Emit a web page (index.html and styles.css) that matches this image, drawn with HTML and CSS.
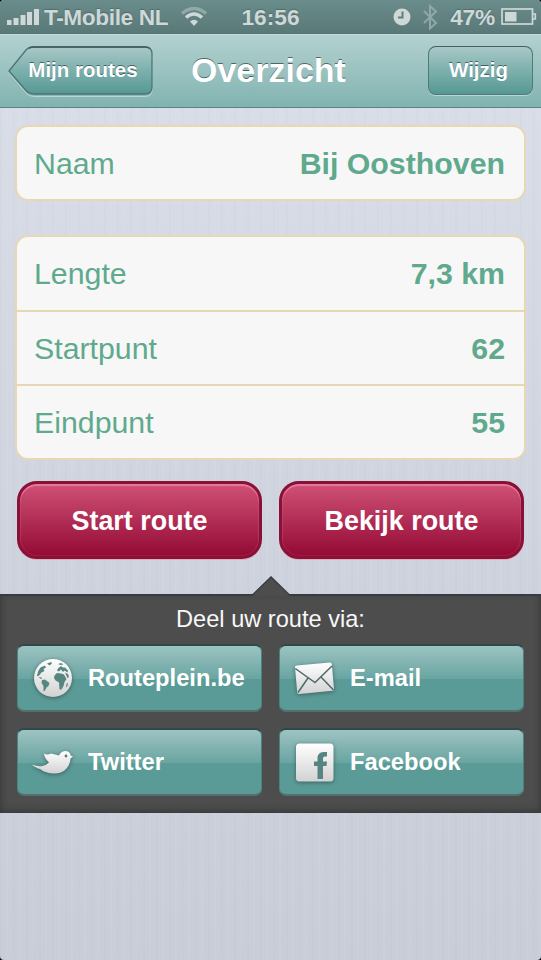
FILE: index.html
```html
<!DOCTYPE html>
<html lang="nl">
<head>
<meta charset="utf-8">
<title>Overzicht</title>
<link rel="stylesheet" href="styles.css">
</head>
<body>
<div class="screen">
  <header class="status">
    <div class="status-left">
      <svg class="signal" width="33" height="18" viewBox="0 0 33 18"><path d="M0 12h4.500v5H0zM6.500 10h5v7h-5zM13.500 7h5v10h-5zM20 4h5v13h-5zM27 1h5v16h-5z"/></svg>
      <span class="carrier">T-Mobile NL</span>
      <svg class="wifi" width="28" height="20" viewBox="0 0 28 20"><path class="dim" d="M2 6.500Q14-3.500 26 6.500"/><path d="M6 10.500Q14 3.500 22 10.500"/><path d="M10 14.500Q14 11 18 14.500L14 19z" class="solid"/></svg>
    </div>
    <span class="clock">16:56</span>
    <div class="status-right">
      <svg class="alarm" width="18" height="18" viewBox="0 0 18 18"><circle cx="9" cy="9" r="8.500"/><path d="M9.500 3.500v6H5"/></svg>
      <svg class="bluetooth" width="16" height="26" viewBox="0 0 16 26"><path d="M2 7l12 12-6 5.500V2l6 5.500L2 19"/></svg>
      <span class="percent">47%</span>
      <svg class="battery" width="36" height="18" viewBox="0 0 36 18"><rect class="case" x="1" y="1" width="30.500" height="15"/><path class="case" d="M32 6h2.300v5H32"/><rect class="level" x="4" y="4" width="11.500" height="9.500"/></svg>
    </div>
  </header>

  <nav class="nav">
    <button class="back">
      <svg class="back-shape" width="146" height="52" viewBox="0 0 146 52">
        <defs><linearGradient id="backfill" x1="0" y1="0" x2="0" y2="1"><stop offset="0" stop-color="#a9c8c7"/><stop offset=".5" stop-color="#7cb0ad"/><stop offset="1" stop-color="#579893"/></linearGradient></defs>
        <path d="M1 26Q14 10 18 5 21 2 26 2H137Q144 2 144 9V43Q144 50 137 50H26Q21 50 18 46.500 14 42 1 26Z" fill="none" stroke="#b9d7d5" transform="translate(0 .5)"/>
        <path d="M1 25Q14 9 18 4 21 1 26 1H137Q144 1 144 8V41Q144 48 137 48H26Q21 48 18 44.500 14 40 1 25Z" fill="url(#backfill)" stroke="#4c7475" stroke-width="1.300"/>
        <path d="M21 2Q23 1 26 1H137Q140 1 142 2.500" fill="none" stroke="#41595d" stroke-width="1.500"/>
      </svg>
      <span class="back-label">Mijn routes</span>
    </button>
    <h1 class="title">Overzicht</h1>
    <button class="edit">Wijzig</button>
  </nav>

  <main class="content">
    <dl class="group">
      <div class="row"><dt>Naam</dt><dd>Bij Oosthoven</dd></div>
    </dl>
    <dl class="group details">
      <div class="row"><dt>Lengte</dt><dd>7,3 km</dd></div>
      <div class="row"><dt>Startpunt</dt><dd>62</dd></div>
      <div class="row"><dt>Eindpunt</dt><dd>55</dd></div>
    </dl>
    <div class="actions">
      <button class="primary">Start route</button>
      <button class="primary">Bekijk route</button>
    </div>
  </main>

  <section class="share">
    <svg class="notch" width="38" height="20" viewBox="0 0 38 20"><path d="M0 20L1 19 19 1 37 19 38 20z" fill="#4d4d4d"/><path d="M0 19L1 18.500 19 1 37 18.500 38 19" fill="none" stroke="#383c40" stroke-width="1.500"/></svg>
    <h2 class="share-title">Deel uw route via:</h2>
    <div class="share-grid">
      <button class="share-button">
        <svg class="icon" width="42" height="42" viewBox="0 0 42 42">
          <defs><linearGradient id="metal" x1="0" y1="0" x2="0" y2="1"><stop offset="0" stop-color="#fff"/><stop offset="1" stop-color="#d2d2d2"/></linearGradient></defs>
          <circle cx="21" cy="20" r="19" fill="url(#metal)"/>
          <g class="land">
            <path d="M5 17.500Q5.500 13 8.500 9.500L13 7.500 14 9.500 11.500 11 12.500 13 9.500 14.500 7.500 17 6 18.500zM15 5.500L19 4 20 5.500 17.500 7.500zM7 19l2.500.5.5 1.500-2-.5z"/>
            <path d="M10 22L13 21.500 17.500 25 16.500 28 14.500 29.500 13 32.500 11.500 33.500 11.500 28 9.500 25z"/>
            <path d="M22.500 17.500L25 15 29 15.500 32 16.500 34.500 21 32.500 24 31.500 28 29.500 31.500 27.500 31.500 27 24.500 23.500 22.500 22 20z"/>
            <path d="M25 12.500L26 10.500 29 8 31 9.500 33 9.500 36 12.500 35.500 14.500 32.500 12.500 31 14 29 11.500 27 13.500zM26 6l3-1 2.500 1.500-3 .5zM33 14.500L36 16 37 19 35.500 20zM34.500 26l1.500-1.500-.5 3.500-1.500 1.500z"/>
          </g>
        </svg>
        <span>Routeplein.be</span>
      </button>
      <button class="share-button">
        <svg class="icon" width="42" height="42" viewBox="0 0 42 42">
          <path d="M1 9Q.800 7.800 2.500 7.500L35.500 4.500Q37.500 4.300 37.800 6L40 31Q40.100 32.500 38.500 32.800L5.500 36Q3.500 36.200 3.200 34.500z" fill="url(#metal)"/>
          <path d="M1.300 10.500L21 24.500 38 8M4 34.500L14 20M39.500 32L27 19" fill="none" stroke="#4f6a68" stroke-width="1.500"/>
        </svg>
        <span>E-mail</span>
      </button>
      <button class="share-button">
        <svg class="icon" width="42" height="42" viewBox="0 0 42 42">
          <path d="M0 22.500Q6 25 10.500 24Q14.500 23 17 20.500Q12.500 16.500 12 11.500Q15 13.500 19 11.500L27 13.500Q28.500 9.500 33 9Q38 9 38.700 13.500L41 14.500 38.500 16.500Q38 24 32.500 28.500Q28 32 21 31.500Q12 30.500 9 27.500Q2 25 0 22.500z" fill="url(#metal)"/>
          <circle cx="34" cy="14" r="1.400" fill="#607572"/>
        </svg>
        <span>Twitter</span>
      </button>
      <button class="share-button">
        <svg class="icon" width="42" height="42" viewBox="0 0 42 42">
          <rect x="2" y="1.500" width="37.500" height="38" rx="3.500" fill="url(#metal)"/>
          <path d="M23.500 37V24H20V19.500H23.500V16.500Q23.500 10 29.500 10H33V14.500H31Q29 14.500 29 16.500V19.500H33L32.500 24H29V37z" fill="#568581"/>
        </svg>
        <span>Facebook</span>
      </button>
    </div>
  </section>
</div>
</body>
</html>
```
FILE: styles.css
```css
* { box-sizing: border-box; }
body { margin: 0; background: #000; font-family: "Liberation Sans", Arial, sans-serif; }
button { font: inherit; padding: 0; border: 0; }
h1, h2, dl, dd { margin: 0; }

.screen {
  width: 541px;
  height: 960px;
  overflow: hidden;
  border-radius: 4px;
  background:
    repeating-linear-gradient(90deg, rgba(110, 125, 160, .025) 0 2px, transparent 2px 6px, rgba(255, 255, 255, .04) 6px 8px, transparent 8px 13px),
    linear-gradient(#d8dde7 108px, #cdd2dd 600px, #c9cdd8);
}

.status {
  display: grid;
  grid-template-columns: 1fr auto 1fr;
  align-items: center;
  height: 34px;
  padding: 0 4px 0 7px;
  background: linear-gradient(#6a8c8b, #5a7a79 32px, #527473);
  color: #ced8d7;
  font-size: 22.7px;
  font-weight: bold;
  text-shadow: 0 -1px 1px rgba(50, 75, 75, .45);
}
.status-left, .status-right { display: flex; align-items: center; }
.status-right { justify-content: flex-end; }
.signal { fill: #ced8d7; margin-right: 4px; }
.carrier { letter-spacing: -.4px; white-space: nowrap; }
.clock { margin-left: -3px; }
.wifi { margin-left: 12px; fill: none; stroke: #ced8d7; stroke-width: 3.5; }
.wifi .dim { stroke: #91a9a8; }
.wifi .solid { fill: #ced8d7; stroke: none; }
.alarm { fill: #ced8d7; margin-right: 11px; }
.alarm path { fill: none; stroke: #5e7f7e; stroke-width: 2; }
.bluetooth { fill: none; stroke: #90a8a7; stroke-width: 2; margin-right: 12px; }
.percent { margin-right: 6px; letter-spacing: -.2px; }
.battery .case { fill: none; stroke: #ced8d7; stroke-width: 1.7; }
.battery .level { fill: #ced8d7; }

.nav {
  display: grid;
  grid-template-columns: 146px 1fr 105px;
  align-items: center;
  height: 74px;
  padding: 0 8px;
  color: #fff;
  background: linear-gradient(#b3d1d0, #81b3b0);
  border-top: 1px solid #c1dbd9;
  border-bottom: 1.5px solid #578482;
  text-shadow: 0 -1.5px 0 rgba(50, 72, 74, .75);
}
.back { position: relative; width: 146px; height: 50px; background: none; color: inherit; text-shadow: inherit; }
.back-shape { position: absolute; left: 0; top: 0; }
.back-label { position: relative; top: -1px; padding-left: 4px; font-size: 20.5px; font-weight: bold; white-space: nowrap; }
.title { padding: 0 0 2px 37px; font-size: 34px; line-height: 40px; }
.edit {
  width: 105px;
  height: 49px;
  padding-right: 4px;
  border: 1.5px solid #50797a;
  border-top-color: #445e61;
  border-radius: 8px;
  background: linear-gradient(#a9c8c7, #7cb0ad 50%, #579893);
  box-shadow: 0 1px 0 #b9d7d5;
  color: inherit;
  font-size: 20.5px;
  font-weight: bold;
  text-shadow: inherit;
  transform: translateY(-1px);
}

.content { height: 486px; padding: 17px 15px 0; }
.group {
  border: 2px solid #e7d7b4;
  border-radius: 13px;
  background: #f7f7f7;
  color: #5fa98d;
  font-size: 30.3px;
}
.details { margin-top: 34px; }
.row { display: flex; justify-content: space-between; align-items: center; height: 72px; padding: 1px 19px 0 17px; }
.details .row { height: 74px; }
.row + .row { border-top: 2px solid #e7d7b4; }
.details .row:first-child { height: 73px; }
.row dd { font-weight: bold; }
.actions { display: grid; grid-template-columns: 245px 245px; gap: 17px; margin: 21px 0 0 2px; }
.primary {
  height: 78px;
  padding-top: 2px;
  border: 3px solid #8a1136;
  border-radius: 20px;
  background: linear-gradient(#d05176, #930a34);
  box-shadow: inset 0 2px 1px #e879a0, inset 0 0 2px rgba(240, 120, 165, .5), 0 1px 0 rgba(230, 150, 175, .65);
  color: #fff;
  font-size: 26.9px;
  font-weight: bold;
}

.share {
  position: relative;
  height: 219px;
  padding: 10px 17px 0;
  border-top: 2px solid #383c40;
  background: #4d4d4d;
  box-shadow: inset 0 -5px 7px -3px #393939, inset 5px 0 6px -4px #3d3d3d, inset -5px 0 6px -4px #3d3d3d;
}
.notch { position: absolute; left: 251.5px; top: -20px; }
.share-title { color: #f8f8f8; text-align: center; font-size: 23.6px; line-height: 27px; font-weight: normal; }
.share-grid { display: grid; grid-template-columns: 245px 245px; gap: 16px 17px; margin-top: 11px; }
.share-button {
  display: flex;
  align-items: center;
  height: 68px;
  padding: 1px 0 0 14px;
  border: 1px solid #4a8380;
  border-top: 2px solid #2e494a;
  border-bottom: 2px solid #53706f;
  border-radius: 7px;
  background: linear-gradient(#9dc3c2, #69a5a1 51%, #5b9b97 52%);
  color: #fff;
  font-size: 23.7px;
  font-weight: bold;
}
.icon { margin-right: 14px; filter: drop-shadow(0 1px 2px rgba(35, 65, 65, .65)); }
.land { fill: #578681; }
```
